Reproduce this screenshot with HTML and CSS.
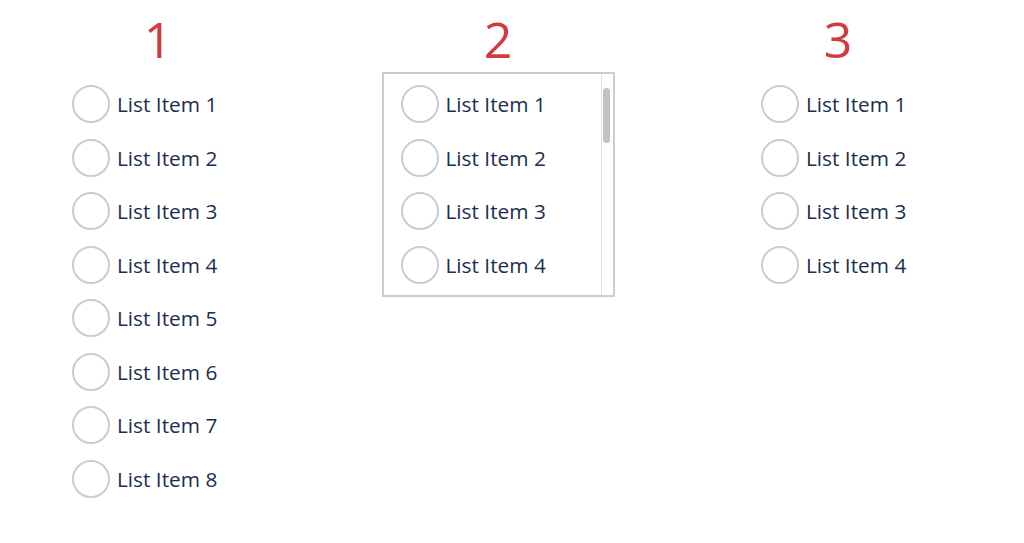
FILE: index.html
```html
<!DOCTYPE html>
<html lang="en">
<head>
    <meta charset="UTF-8">
    <meta name="viewport" content="width=device-width, initial-scale=1.0">
    <title>List Variants</title>
    <link rel="stylesheet" href="styles.css">
</head>
<body>

<div class="columns">
    <section class="column col-one">
        <h2>1</h2>
        <ul class="radio-list">
            <li><span class="radio"></span>List Item 1</li>
            <li><span class="radio"></span>List Item 2</li>
            <li><span class="radio"></span>List Item 3</li>
            <li><span class="radio"></span>List Item 4</li>
            <li><span class="radio"></span>List Item 5</li>
            <li><span class="radio"></span>List Item 6</li>
            <li><span class="radio"></span>List Item 7</li>
            <li><span class="radio"></span>List Item 8</li>
        </ul>
    </section>

    <section class="column col-two">
        <h2>2</h2>
        <div class="scroll-box">
            <ul class="radio-list">
                <li><span class="radio"></span>List Item 1</li>
                <li><span class="radio"></span>List Item 2</li>
                <li><span class="radio"></span>List Item 3</li>
                <li><span class="radio"></span>List Item 4</li>
                <li><span class="radio"></span>List Item 5</li>
                <li><span class="radio"></span>List Item 6</li>
                <li><span class="radio"></span>List Item 7</li>
                <li><span class="radio"></span>List Item 8</li>
            </ul>
            <div class="rail"><div class="thumb"></div></div>
        </div>
    </section>

    <section class="column col-three">
        <h2>3</h2>
        <ul class="radio-list">
            <li><span class="radio"></span>List Item 1</li>
            <li><span class="radio"></span>List Item 2</li>
            <li><span class="radio"></span>List Item 3</li>
            <li><span class="radio"></span>List Item 4</li>
        </ul>
    </section>
</div>

</body>
</html>
```

FILE: styles.css
```css
body {
    margin: 8px;
    font-family: 'Open Sans', 'Noto Sans', sans-serif;
    background: #fff;
    color: #1a2f4d;
}
.columns {
    display: grid;
    grid-template-columns: 300px 300px 300px;
    column-gap: 40px;
    align-items: start;
}
h2 {
    margin: 0 0 3px;
    padding-top: 1px;
    height: 60px;
    font-size: 50px;
    line-height: 60px;
    font-weight: 400;
    text-align: center;
    color: #d23a3d;
}
.radio-list {
    list-style: none;
    margin: 0;
    padding: 0;
    display: flex;
    flex-direction: column;
    gap: 15.57px;
}
.radio-list li {
    display: flex;
    align-items: center;
    gap: 7px;
    height: 38px;
    font-size: 20.8px;
    white-space: nowrap;
}
.radio {
    width: 34px;
    height: 34px;
    border: 2px solid #c8ccd8;
    border-radius: 50%;
    flex: none;
}
.col-one .radio-list {
    padding: 13px 0 0 64px;
}
.col-three .radio-list {
    padding: 13px 0 0 73px;
}
.scroll-box {
    margin: 0 auto;
    width: 229px;
    height: 221px;
    border: 2px solid #c8ccd8;
    display: flex;
    overflow: hidden;
}
.scroll-box .radio-list {
    flex: 1;
    padding: 11px 0 0 17px;
}
.rail {
    width: 11px;
    border-left: 1px solid #dfe2e8;
    flex: none;
}
.thumb {
    width: 7px;
    height: 55px;
    margin: 14px 0 0 1px;
    border-radius: 4px;
    background: #c1c1c1;
}
```
